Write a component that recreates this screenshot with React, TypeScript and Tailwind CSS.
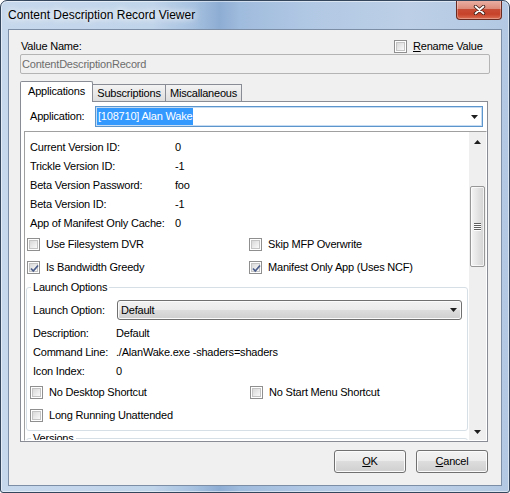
import React from "react"

const fields: [string, string][] = [
  ["Current Version ID:", "0"],
  ["Trickle Version ID:", "-1"],
  ["Beta Version Password:", "foo"],
  ["Beta Version ID:", "-1"],
  ["App of Manifest Only Cache:", "0"],
]

function Box({ checked }: { checked?: boolean }) {
  return (
    <span className="relative flex h-[13px] w-[13px] shrink-0 items-center justify-center border border-[#8f8f8f] bg-white">
      <span className="h-[9px] w-[9px] border border-[#c4c4c4] bg-gradient-to-br from-[#d9d9d9] to-[#fafafa]" />
      {checked && (
        <svg className="absolute left-[1px] top-[1px]" width="11" height="11" viewBox="0 0 11 11">
          <path d="M2 5.5 L4.3 8 L9 2.5" fill="none" stroke="#4b5d8a" strokeWidth="1.7" />
        </svg>
      )}
    </span>
  )
}

function Check({ label, checked }: { label: React.ReactNode; checked?: boolean }) {
  return (
    <div className="flex items-center gap-[6px]">
      <Box checked={checked} />
      <span>{label}</span>
    </div>
  )
}

function Arrow({ down = true }: { down?: boolean }) {
  return (
    <svg width="7" height="4" viewBox="0 0 7 4">
      <polygon points={down ? "0,0 7,0 3.5,4" : "0,4 7,4 3.5,0"} fill="#1e1e1e" />
    </svg>
  )
}

function Btn({ children }: { children: React.ReactNode }) {
  return (
    <button className="flex h-[23px] w-[72px] items-center justify-center rounded-[3px] border border-[#707070] bg-[linear-gradient(180deg,#f2f2f2_0%,#ebebeb_50%,#dddddd_50%,#cfcfcf_100%)] shadow-[inset_0_0_0_1px_#fbfbfb]">
      {children}
    </button>
  )
}

export default function App() {
  return (
    <div className="h-[493px] w-[510px] bg-white">
      <div className="flex h-full w-full flex-col overflow-hidden rounded-t-[7px] rounded-b-[3px] border border-[#34465c] bg-[linear-gradient(90deg,#c6d8ec_0%,#c0d4ea_30%,#a6c1e0_38%,#8eadd3_43%,#9fbbdd_47%,#b1c8e4_60%,#bccfe6_80%,#b3c9e3_100%)] font-['Liberation_Sans',Arial,sans-serif] text-[11px] tracking-[-0.2px] text-black shadow-[inset_0_0_0_1px_rgba(255,255,255,0.5)]">
        {/* title bar */}
        <div className="flex h-[28px] shrink-0 items-start justify-between">
          <span className="ml-[7px] mt-[6px] text-[12px] leading-[16px] tracking-normal [text-shadow:0_0_6px_#fff,0_0_10px_#fff]">
            Content Description Record Viewer
          </span>
          <div className="-mt-px mr-[7px] flex h-[20px] w-[46px] items-center justify-center rounded-b-[4px] border border-t-0 border-[#6b2a1f] bg-[linear-gradient(180deg,#ebb3a7_0%,#dd8c7b_45%,#c84b34_50%,#c7432a_75%,#db6e52_100%)] shadow-[inset_0_0_0_1px_rgba(255,255,255,0.3)]">
            <svg width="13" height="10" viewBox="0 0 13 10">
              <path d="M2.5 1.5 L10.5 8.5 M10.5 1.5 L2.5 8.5" stroke="#3a1a14" strokeWidth="3.4" strokeLinecap="round" />
              <path d="M2.5 1.5 L10.5 8.5 M10.5 1.5 L2.5 8.5" stroke="#ffffff" strokeWidth="1.8" strokeLinecap="round" />
            </svg>
          </div>
        </div>

        {/* client area */}
        <div className="mx-[7px] flex h-[457px] shrink-0 flex-col border border-[#7b8ea6] bg-[#f0f0f0] px-[11px]">
          <div className="mt-[8px] flex h-[16px] items-center">
            <span className="w-[374px] pl-[1px]">Value Name:</span>
            <Check label={<><u>R</u>ename Value</>} />
          </div>
          <div className="flex h-[20px] w-[470px] items-center rounded-[2px] border border-[#b4b4b4] bg-[#f0f0f0] pl-[1px] text-[#6d6d6d]">
            ContentDescriptionRecord
          </div>

          {/* tabs */}
          <div className="relative z-10 -mb-px mt-[7px] flex h-[21px] items-end">
            <div className="flex h-[21px] w-[73px] items-center justify-center rounded-t-[2px] border border-b-0 border-[#898c95] bg-white pb-[1px]">
              Applications
            </div>
            <div className="mb-px flex h-[17px] w-[73px] items-center justify-center border border-b-0 border-l-0 border-[#898c95] bg-gradient-to-b from-[#f3f3f3] to-[#dedede]">
              Subscriptions
            </div>
            <div className="mb-px flex h-[17px] w-[76px] items-center justify-center border border-b-0 border-l-0 border-[#898c95] bg-gradient-to-b from-[#f3f3f3] to-[#dedede]">
              Miscallaneous
            </div>
          </div>

          <div className="flex h-[341px] w-[468px] flex-col border border-[#898c95] bg-white">
            <div className="mt-[4px] flex h-[21px] items-center">
              <span className="w-[74px] pl-[9px]">Application:</span>
              <div className="flex h-[21px] w-[388px] items-center border border-[#5b95cc] bg-white pl-[1px] shadow-[inset_0_0_0_1px_#c5dcf2]">
                <span className="inline-block h-[17px] bg-[#3399ff] px-[1px] leading-[17px] text-white">[108710] Alan Wake</span>
                <span className="ml-auto mr-[4px] flex w-[8px] justify-center">
                  <Arrow />
                </span>
              </div>
            </div>

            {/* scrolling panel */}
            <div className="ml-[3px] mt-[4px] flex h-[310px] w-[463px] border border-[#a0a0a0] border-b-white border-r-white bg-white">
              <div className="w-[444px] overflow-hidden pt-[6px]">
                {fields.map(([k, v]) => (
                  <div key={k} className="flex h-[19px] items-center pl-[5px]">
                    <span className="w-[145px]">{k}</span>
                    <span>{v}</span>
                  </div>
                ))}
                <div className="flex h-[23px] items-center pl-[2px]">
                  <div className="w-[222px]"><Check label="Use Filesystem DVR" /></div>
                  <Check label="Skip MFP Overwrite" />
                </div>
                <div className="flex h-[23px] items-center pl-[2px]">
                  <div className="w-[222px]"><Check label="Is Bandwidth Greedy" checked /></div>
                  <Check label="Manifest Only App (Uses NCF)" checked />
                </div>

                <fieldset className="ml-[1px] mt-[2px] w-[442px] rounded-[3px] border border-[#d5dfe5] pb-[3px]">
                  <legend className="ml-[4px] px-[2px] leading-[13px]">Launch Options</legend>
                  <div className="mt-[6px] flex h-[20px] items-center pl-[6px]">
                    <span className="w-[84px]">Launch Option:</span>
                    <div className="flex h-[20px] w-[345px] items-center rounded-[3px] border border-[#707070] bg-[linear-gradient(180deg,#f2f2f2_0%,#ebebeb_50%,#dddddd_50%,#cfcfcf_100%)] pl-[3px] shadow-[inset_0_0_0_1px_#fbfbfb]">
                      <span>Default</span>
                      <span className="ml-auto mr-[4px] flex w-[8px] justify-center">
                        <Arrow />
                      </span>
                    </div>
                  </div>
                  <div className="mt-[4px]">
                    {[
                      ["Description:", "Default"],
                      ["Command Line:", "./AlanWake.exe -shaders=shaders"],
                      ["Icon Index:", "0"],
                    ].map(([k, v]) => (
                      <div key={k} className="flex h-[19px] items-center pl-[6px]">
                        <span className="w-[83px]">{k}</span>
                        <span>{v}</span>
                      </div>
                    ))}
                  </div>
                  <div className="flex h-[23px] items-center pl-[3px]">
                    <div className="w-[220px]"><Check label="No Desktop Shortcut" /></div>
                    <Check label="No Start Menu Shortcut" />
                  </div>
                  <div className="flex h-[23px] items-center pl-[3px]">
                    <Check label="Long Running Unattended" />
                  </div>
                </fieldset>

                <fieldset className="ml-[1px] mt-[1px] h-[60px] w-[442px] rounded-[3px] border border-[#d5dfe5]">
                  <legend className="ml-[4px] px-[2px] leading-[13px]">Versions</legend>
                </fieldset>
              </div>

              {/* scrollbar */}
              <div className="flex w-[17px] shrink-0 flex-col bg-[#efefef]">
                <div className="flex h-[17px] items-center justify-center pt-[3px]">
                  <Arrow down={false} />
                </div>
                <div className="flex-1">
                  <div className="ml-px mt-[37px] flex h-[81px] w-[15px] items-center justify-center rounded-[2px] border border-[#979797] bg-gradient-to-r from-[#f5f5f5] to-[#d3d3d3] shadow-[inset_0_0_0_1px_rgba(255,255,255,0.7)]">
                    <svg width="7" height="8" viewBox="0 0 7 8">
                      <path d="M0 0.5 H7 M0 2.5 H7 M0 4.5 H7 M0 6.5 H7" stroke="#5f5f5f" strokeWidth="1" />
                      <path d="M0 1.5 H7 M0 3.5 H7 M0 5.5 H7 M0 7.5 H7" stroke="#ffffff" strokeWidth="1" />
                    </svg>
                  </div>
                </div>
                <div className="flex h-[17px] items-center justify-center">
                  <Arrow />
                </div>
              </div>
            </div>
          </div>

          <div className="mt-[8px] flex w-[468px] justify-end gap-[10px]">
            <Btn><u>O</u>K</Btn>
            <Btn><u>C</u>ancel</Btn>
          </div>
        </div>
      </div>
    </div>
  )
}
